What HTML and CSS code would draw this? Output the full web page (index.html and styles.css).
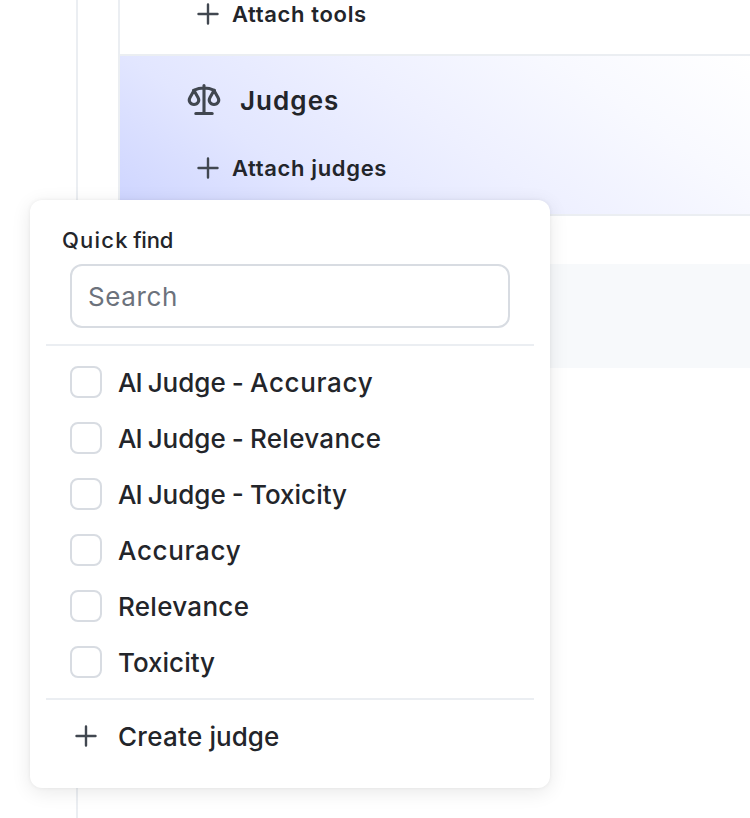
FILE: index.html
```html
<!DOCTYPE html>
<html lang="en">
<head>
    <meta charset="UTF-8">
    <meta name="viewport" content="width=device-width, initial-scale=1.0">
    <title>Judges</title>
    <link rel="stylesheet" href="styles.css">
</head>
<body>
    <div class="page">
        <main class="content">
            <section class="panel">
                <div class="section tools">
                    <button class="attach">
                        <svg class="plus" viewBox="0 0 24 24"><path d="M12 2.500v19M2.500 12h19"/></svg>
                        Attach tools
                    </button>
                </div>
                <div class="section judges">
                    <h2 class="section-title">
                        <svg class="scales" viewBox="0 0 36 36">
                            <path d="M18 3.500V31M9.800 31.500h16.400M7.500 8.300C11 6.800 14 6 18 6S25 6.800 28.500 8.300"/>
                            <path d="M8 8.500L4 15.500C2 19 4.300 22.500 8 22.500S14 19 12 15.500L8 8.500zM28 8.500l-4 7C22 19 24.300 22.500 28 22.500S34 19 32 15.500L28 8.500z"/>
                        </svg>
                        Judges
                    </h2>
                    <button class="attach">
                        <svg class="plus" viewBox="0 0 24 24"><path d="M12 2.500v19M2.500 12h19"/></svg>
                        Attach judges
                    </button>
                </div>
            </section>
            <div class="footer-bar"></div>
        </main>
    </div>

    <div class="popover">
        <label class="find-label" for="search"><span class="loose">Quick</span> find</label>
        <input class="search" id="search" type="text" placeholder="Search">
        <ul class="options">
            <li><label class="option"><input type="checkbox" class="check"><span><span class="tight">AI</span> Judge - <span class="wide">Accuracy</span></span></label></li>
            <li><label class="option"><input type="checkbox" class="check"><span><span class="tight">AI</span> Judge - <span class="medium">Relevance</span></span></label></li>
            <li><label class="option"><input type="checkbox" class="check"><span><span class="tight">AI</span> Judge - Toxicity</span></label></li>
            <li><label class="option"><input type="checkbox" class="check"><span class="wide">Accuracy</span></label></li>
            <li><label class="option"><input type="checkbox" class="check"><span class="medium">Relevance</span></label></li>
            <li><label class="option"><input type="checkbox" class="check"><span>Toxicity</span></label></li>
        </ul>
        <button class="create">
            <svg class="plus" viewBox="0 0 24 24"><path d="M12 2.500v19M2.500 12h19"/></svg>
            <span><span class="medium">Create</span> judge</span>
        </button>
    </div>
</body>
</html>
```

FILE: styles.css
```css
* {
    box-sizing: border-box;
}
body {
    margin: 0;
    height: 818px;
    overflow: hidden;
    position: relative;
    background-color: #fff;
    color: #23252a;
    font-family: Inter, "Liberation Sans", sans-serif;
}
button {
    border: none;
    background: none;
    padding: 0;
    color: inherit;
    font-family: inherit;
}
svg {
    flex: none;
    fill: none;
    stroke: #414750;
    stroke-linecap: round;
    stroke-linejoin: round;
}

/* Page behind the popover */
.page {
    display: flex;
    height: 100%;
    padding-left: 76px;
}
.content {
    flex: 1;
    border-left: 2px solid #ebeef2;
    padding-left: 40px;
}
.panel {
    border-left: 2px solid #ebeef2;
    border-bottom: 2px solid #ebeef2;
    height: 216px;
}
.section {
    padding-left: 76px;
}
.tools {
    height: 56px;
    border-bottom: 2px solid #ebeef2;
}
.judges {
    height: 158px;
    padding-left: 66px;
    padding-top: 24px;
    background: linear-gradient(35deg, #cdd4ff 0%, #e2e6ff 27%, #eef0ff 52%, #f8f9ff 77%, #fff 100%);
}
.judges .attach {
    margin: 34px 0 0 10px;
}
.section-title {
    display: flex;
    align-items: center;
    gap: 18px;
    height: 40px;
    margin: 0;
    font-size: 26px;
    font-weight: 600;
    letter-spacing: 1.05px;
}
.scales {
    width: 36px;
    height: 36px;
    stroke-width: 3.1;
}
.attach {
    display: flex;
    align-items: center;
    gap: 12px;
    height: 28px;
    font-size: 22px;
    font-weight: 600;
    letter-spacing: 0.64px;
}
.plus {
    width: 24px;
    height: 24px;
    stroke-width: 2.4;
}
.footer-bar {
    height: 104px;
    margin-top: 48px;
    background-color: #f7f9fb;
}

/* Quick find popover */
.popover {
    position: absolute;
    left: 30px;
    top: 200px;
    width: 520px;
    height: 588px;
    padding: 24px 16px;
    border-radius: 12px;
    background-color: #fff;
    box-shadow: 0 4px 20px rgba(0, 0, 0, 0.09), 0 0 4px rgba(0, 0, 0, 0.06);
}
.find-label {
    display: block;
    padding-left: 16px;
    font-size: 22px;
    font-weight: 500;
    line-height: 32px;
    letter-spacing: -0.2px;
    word-spacing: -1.2px;
}
.search {
    display: block;
    width: 440px;
    height: 64px;
    margin: 8px 0 16px 24px;
    padding: 0 16px;
    border: 2px solid #d8dce2;
    border-radius: 12px;
    background-color: #fff;
    font-family: inherit;
    font-size: 26px;
    letter-spacing: 0.6px;
}
.search::placeholder {
    color: #6c727c;
}
.options {
    list-style: none;
    margin: 0;
    padding: 8px 24px;
    border-top: 2px solid #ebeef2;
    border-bottom: 2px solid #ebeef2;
}
.option,
.create {
    display: flex;
    align-items: center;
    height: 56px;
    gap: 16px;
    font-size: 26px;
    font-weight: 500;
    word-spacing: -0.8px;
}
.check {
    appearance: none;
    width: 32px;
    height: 32px;
    margin: 0;
    border: 2px solid #d8dce2;
    border-radius: 8px;
    background-color: #fff;
}
.create {
    margin-top: 8px;
    padding-left: 28px;
    gap: 20px;
    word-spacing: 0;
}

/* Letter fit */
.loose {
    letter-spacing: 1.2px;
}
.wide {
    letter-spacing: 0.65px;
}
.medium {
    letter-spacing: 0.3px;
}
.tight {
    letter-spacing: -1px;
}
```
